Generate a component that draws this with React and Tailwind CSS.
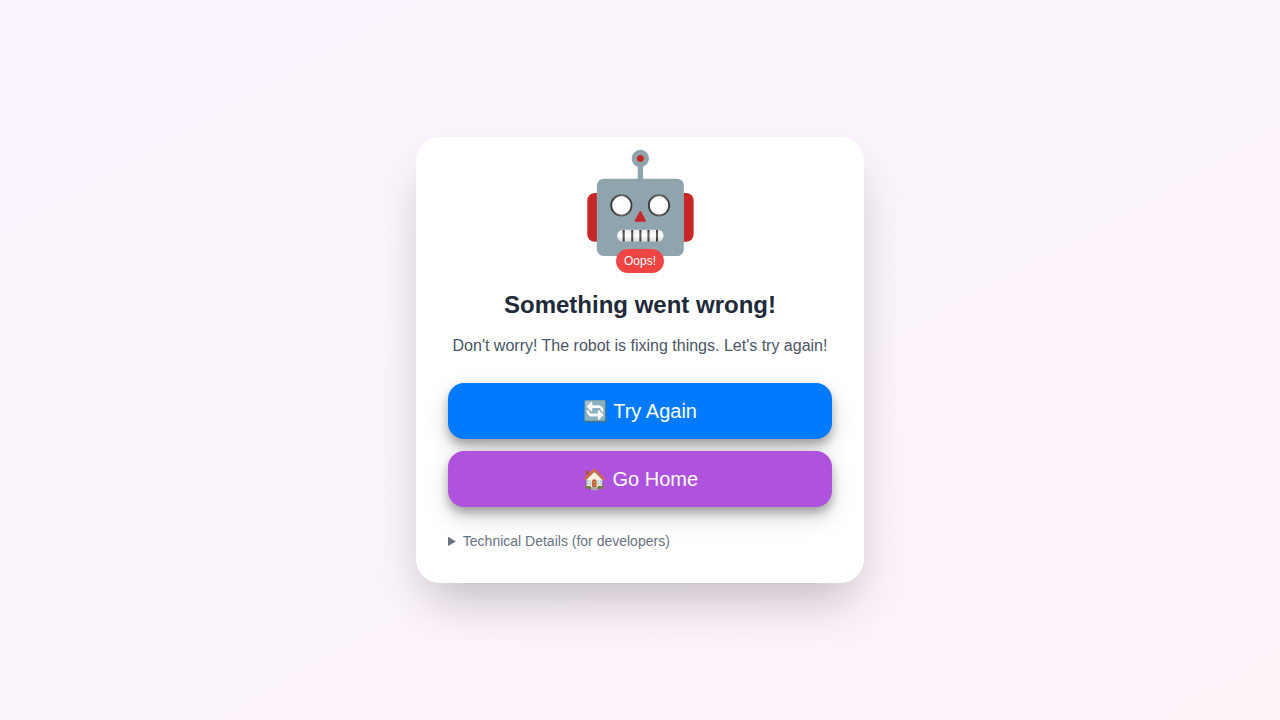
export default function App() {
  return (
    <div className="min-h-screen flex items-center justify-center p-4 bg-gradient-to-br from-purple-50 to-pink-50 font-['Liberation_Sans',Arial,sans-serif]">
      <div className="w-full max-w-md bg-white rounded-3xl shadow-2xl p-8 text-center">
        <div className="relative mb-6 h-24 flex justify-center">
          <div className="text-8xl leading-none -mt-[15px] origin-top-left scale-[1.01]">🤖</div>
          <div className="absolute -bottom-2 left-1/2 -translate-x-1/2 h-6 px-2 flex items-center rounded-full bg-[#ef4444] text-white text-xs">
            Oops!
          </div>
        </div>
        <h1 className="text-2xl font-bold text-gray-800 mb-3">Something went wrong!</h1>
        <p className="text-gray-600 leading-relaxed mb-6">Don't worry! The robot is fixing things. Let's try again!</p>
        <div className="flex flex-col gap-3">
          <button className="h-14 rounded-2xl bg-[#007aff] text-white text-xl shadow-[0_6px_10px_rgba(0,0,0,0.28),0_10px_24px_rgba(0,0,0,0.15)]">🔄 Try Again</button>
          <button className="h-14 rounded-2xl bg-[#af52de] text-white text-xl shadow-[0_6px_10px_rgba(0,0,0,0.28),0_10px_24px_rgba(0,0,0,0.15)]">🏠 Go Home</button>
        </div>
        <details className="mt-6 text-left">
          <summary className="text-sm text-gray-500 cursor-pointer">Technical Details (for developers)</summary>
        </details>
      </div>
    </div>
  );
}
